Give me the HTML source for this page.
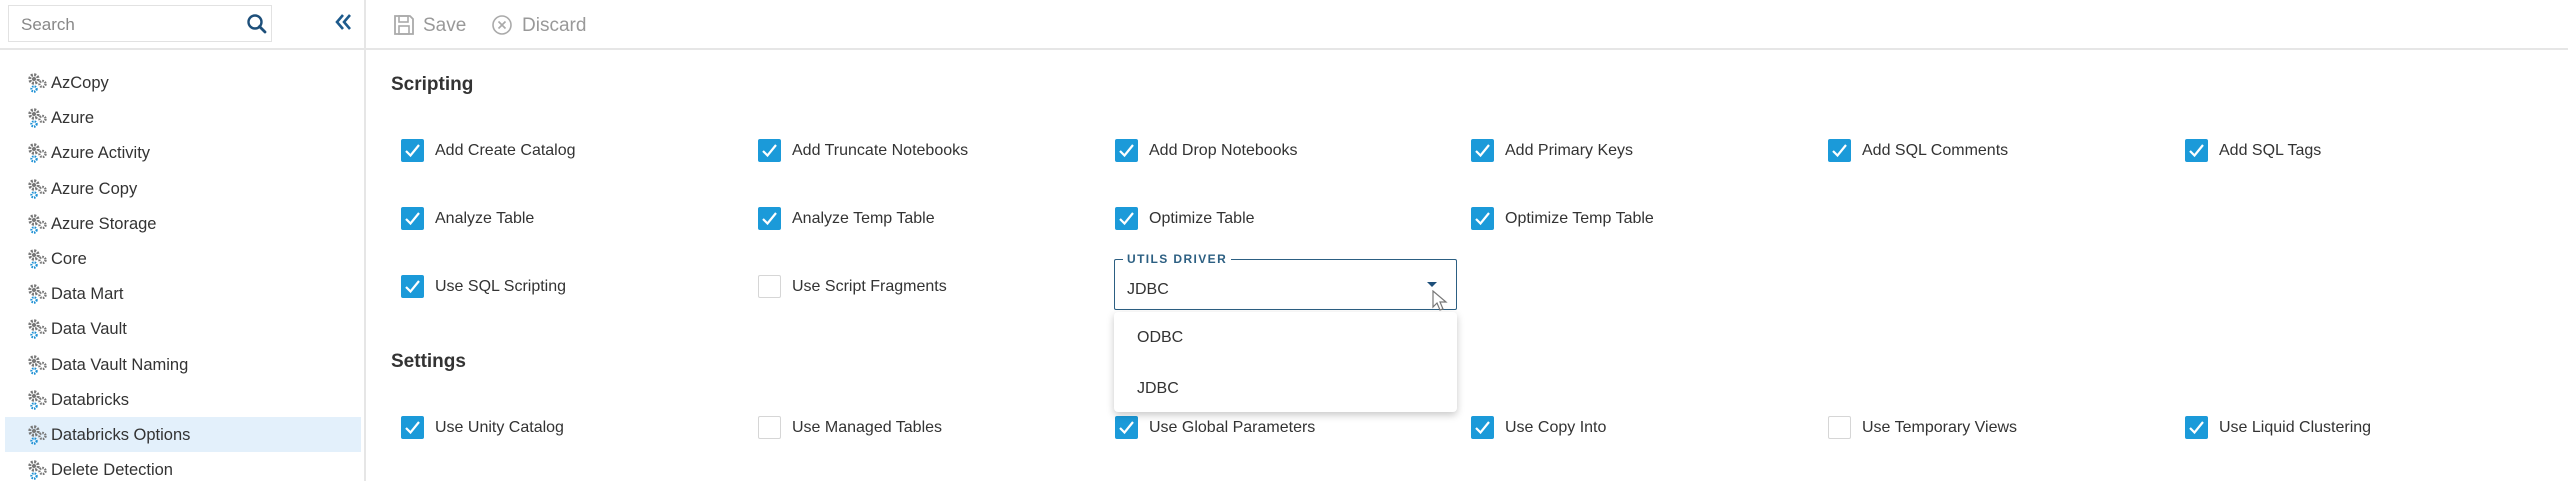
<!DOCTYPE html>
<html><head><meta charset="utf-8"><style>
*{box-sizing:border-box;margin:0;padding:0}
body{width:2568px;height:481px;background:#fff;font-family:"Liberation Sans",sans-serif;color:#333;position:relative;overflow:hidden}
.abs{position:absolute}
.side{left:0;top:0;width:366px;height:481px;border-right:2px solid #e6e6e6}
.hdr{left:0;top:48px;width:2568px;height:2px;background:#e6e6e6}
.search{left:8px;top:5px;width:264px;height:37px;border:1.5px solid #e2e2e2;background:#fff}
.search span{position:absolute;left:12px;top:9px;font-size:17px;color:#888}
.item{position:absolute;left:28px;font-size:16.5px;color:#333;height:24px;line-height:24px;white-space:nowrap}
.item svg{position:absolute;left:0;top:2px}
.item span{position:absolute;left:23px}
.sel{left:5px;top:417px;width:356px;height:35px;background:#e3f0fb}
.h{font-size:19px;font-weight:bold;color:#333;left:391px}
.cb{position:absolute;width:23px;height:23px;border-radius:2px;background:#1b9ad9}
.cb svg{position:absolute;left:3px;top:4px}
.cb.off{background:#fff;border:1.5px solid #d6d6d6}
.lb{position:absolute;font-size:16px;color:#333;white-space:nowrap}
</style></head><body>
<div class="abs side"></div>
<div class="abs hdr"></div>
<div class="abs search"><span>Search</span>
<svg class="abs" style="left:237px;top:7px" width="22" height="22" viewBox="0 0 22 22"><circle cx="9" cy="9" r="6.5" fill="none" stroke="#1d4f7a" stroke-width="2.4"/><line x1="13.5" y1="13.5" x2="19" y2="19" stroke="#1d4f7a" stroke-width="2.8" stroke-linecap="round"/></svg></div>
<svg class="abs" style="left:334px;top:13px" width="20" height="18" viewBox="0 0 20 18"><path d="M9 2 L3 9 L9 16 M16 2 L10 9 L16 16" fill="none" stroke="#1d5a8c" stroke-width="2.6"/></svg>
<svg class="abs" style="left:393px;top:14px" width="22" height="22" viewBox="0 0 22 22"><path d="M2 2h15l3 3v15H2z" fill="none" stroke="#aaa" stroke-width="1.8"/><rect x="6" y="2" width="9" height="6" fill="none" stroke="#aaa" stroke-width="1.6"/><rect x="6" y="12" width="10" height="8" fill="none" stroke="#aaa" stroke-width="1.6"/></svg>
<div class="abs" style="left:423px;top:15px;font-size:19px;color:#999">Save</div>
<svg class="abs" style="left:491px;top:14px" width="22" height="22" viewBox="0 0 22 22"><circle cx="11" cy="11" r="9" fill="none" stroke="#aaa" stroke-width="1.6"/><path d="M7.5 7.5l7 7M14.5 7.5l-7 7" stroke="#aaa" stroke-width="1.6"/></svg>
<div class="abs" style="left:522px;top:15px;font-size:19px;color:#999">Discard</div>

<div class="abs sel"></div>
<div id="tree"></div>
<script>
var names=["AzCopy","Azure","Azure Activity","Azure Copy","Azure Storage","Core","Data Mart","Data Vault","Data Vault Naming","Databricks","Databricks Options","Delete Detection"];
var g='<svg width="20" height="22" viewBox="0 0 20 22"><circle cx="6" cy="6" r="4.2" fill="none" stroke="#777" stroke-width="3" stroke-dasharray="2 1.3"/><circle cx="6" cy="6" r="2" fill="#777"/><circle cx="14.5" cy="11" r="3" fill="none" stroke="#777" stroke-width="2.4" stroke-dasharray="1.6 1.1"/><circle cx="6" cy="16" r="2.6" fill="none" stroke="#1b8fd4" stroke-width="2.2" stroke-dasharray="1.5 1"/></svg>';
var h='';names.forEach(function(n,i){h+='<div class="item" style="top:'+(71+i*35.2)+'px">'+g+'<span>'+n+'</span></div>'});
document.getElementById('tree').innerHTML=h;
var cols=[401,758,1115,1471,1828,2185];
var ck='<svg width="17" height="15" viewBox="0 0 17 15"><path d="M2 8l4.5 4.5L15 2" fill="none" stroke="#fff" stroke-width="2.2"/></svg>';
function row(y,items){var s='';items.forEach(function(it,i){if(!it)return;s+='<div class="cb'+(it[1]?'':' off')+'" style="left:'+cols[i]+'px;top:'+(y-11)+'px">'+(it[1]?ck:'')+'</div><div class="lb" style="left:'+(cols[i]+34)+'px;top:'+(y-8)+'px">'+it[0]+'</div>'});return s}
var b='';
b+=row(150,[["Add Create Catalog",1],["Add Truncate Notebooks",1],["Add Drop Notebooks",1],["Add Primary Keys",1],["Add SQL Comments",1],["Add SQL Tags",1]]);
b+=row(218,[["Analyze Table",1],["Analyze Temp Table",1],["Optimize Table",1],["Optimize Temp Table",1]]);
b+=row(286,[["Use SQL Scripting",1],["Use Script Fragments",0]]);
b+=row(427,[["Use Unity Catalog",1],["Use Managed Tables",0],["Use Global Parameters",1],["Use Copy Into",1],["Use Temporary Views",0],["Use Liquid Clustering",1]]);
document.getElementById('tree').insertAdjacentHTML('afterend',b);
</script>
<div class="abs h" style="top:74px">Scripting</div>
<div class="abs h" style="top:351px">Settings</div>

<div class="abs" style="left:1114px;top:259px;width:343px;height:51px;border:1.5px solid #2c5f82;border-radius:2px"></div>
<div class="abs" style="left:1123px;top:252px;padding:0 4px;background:#fff;font-size:12px;letter-spacing:1.4px;color:#2c5f82;font-weight:bold">UTILS DRIVER</div>
<div class="abs" style="left:1127px;top:281px;font-size:16px;color:#333">JDBC</div>
<svg class="abs" style="left:1425px;top:281px" width="14" height="8" viewBox="0 0 14 8"><path d="M2 1h10L7 6z" fill="#1d4f7a"/></svg>
<svg class="abs" style="left:1432px;top:290px" width="16" height="22" viewBox="0 0 16 22"><path d="M1 1v16l4-4 3 7 3-1-3-7h6z" fill="#fff" stroke="#777" stroke-width="1.2"/></svg>
<div class="abs" style="left:1114px;top:312px;width:343px;height:100px;background:#fff;border-radius:4px;box-shadow:0 3px 8px rgba(0,0,0,.22)">
<div class="abs" style="left:23px;top:17px;font-size:16px">ODBC</div>
<div class="abs" style="left:23px;top:68px;font-size:16px">JDBC</div>
</div>
</body></html>
